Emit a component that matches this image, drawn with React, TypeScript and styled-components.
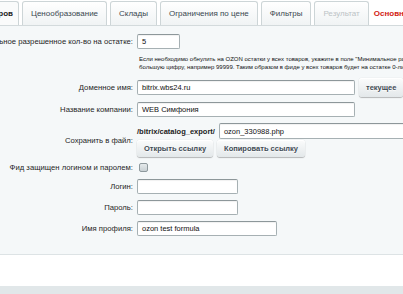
import React from "react";
import styled, { createGlobalStyle, css } from "styled-components";

const Global = createGlobalStyle`
  html, body { margin: 0; padding: 0; background: #ffffff; overflow: hidden; }
  body { font-family: "Liberation Sans", Arial, sans-serif; }
  #root { width: 403px; height: 294px; overflow: hidden; }
`;

const Page = styled.div`
  width: 403px;
  height: 294px;
  overflow: hidden;
  display: flex;
  flex-direction: column;
  background: #ffffff;
`;

const TabBar = styled.div`
  display: flex;
  align-items: flex-end;
  gap: 3px;
  height: 25px;
  flex: none;
  border-bottom: 1px solid #d3dadc;
  white-space: nowrap;
`;

const Tab = styled.div<{ $variant?: "active" | "disabled" | "error" | "normal" }>`
  flex: none;
  height: 24px;
  box-sizing: border-box;
  padding: 0 8px;
  display: flex;
  align-items: center;
  font-size: 8px;
  color: #3a4750;
  border: 1px solid #cdd5d7;
  border-bottom: none;
  border-radius: 3px 3px 0 0;
  background: linear-gradient(#ffffff, #f0f3f4);
  ${(p) =>
    p.$variant === "active" &&
    css`
      width: 100px;
      margin-left: -81px;
      justify-content: flex-end;
      padding-right: 5px;
      font-weight: bold;
      color: #222;
      background: #fafbfb;
    `}
  ${(p) =>
    p.$variant === "disabled" &&
    css`
      color: #bcc3c6;
    `}
  ${(p) =>
    p.$variant === "error" &&
    css`
      color: #d21a12;
      font-weight: bold;
      border-color: transparent;
      background: transparent;
      padding-left: 1px;
    `}
`;

const Panel = styled.div`
  flex: none;
  background: #f5f8f9;
  border-bottom: 1px solid #dde3e5;
  padding: 8px 0 0 0;
  display: flex;
  flex-direction: column;
  height: 229px;
  box-sizing: border-box;
`;

const Row = styled.div<{ $gap?: number }>`
  display: flex;
  align-items: center;
  gap: 4px;
  margin-top: ${(p) => p.$gap ?? 0}px;
  white-space: nowrap;
`;

const Label = styled.div`
  flex: none;
  width: 133px;
  text-align: right;
  font-size: 7.7px;
  color: #262626;
  display: flex;
  justify-content: flex-end;
`;

const Field = styled.div`
  display: flex;
  flex-direction: column;
  gap: 1px;
`;

const Line = styled.div`
  display: flex;
  align-items: center;
  gap: 4px;
`;

const Input = styled.div<{ $w: number; $h?: number }>`
  flex: none;
  width: ${(p) => p.$w}px;
  height: ${(p) => p.$h ?? 15}px;
  box-sizing: border-box;
  border: 1px solid #a6b0b3;
  border-top-color: #8d979a;
  border-radius: 2px;
  background: #ffffff;
  box-shadow: inset 0 1px 1px rgba(0, 0, 0, 0.06);
  font-size: 7.5px;
  color: #111;
  padding-left: 4px;
  display: flex;
  align-items: center;
  overflow: hidden;
`;

const Button = styled.div<{ $h?: number }>`
  flex: none;
  height: ${(p) => p.$h ?? 17}px;
  box-sizing: border-box;
  padding: 0 7px;
  display: flex;
  align-items: center;
  font-size: 7.5px;
  font-weight: bold;
  color: #3f4b54;
  border-radius: 3px;
  background: linear-gradient(#fbfcfc, #e3e8ea);
  box-shadow: 0 0 1px rgba(0, 0, 0, 0.2), 0 1px 1px rgba(0, 0, 0, 0.25),
    inset 0 1px #fff;
  text-shadow: 0 1px rgba(255, 255, 255, 0.7);
`;

const Note = styled.div`
  margin: 6px 0 0 139px;
  font-size: 6px;
  line-height: 8px;
  color: #111;
  white-space: nowrap;
`;

const Path = styled.span`
  font-size: 7.5px;
  font-weight: bold;
  color: #222;
`;

const Check = styled.div`
  width: 9px;
  height: 9px;
  margin-left: 2px;
  box-sizing: border-box;
  border: 1px solid #8e999d;
  border-radius: 2px;
  background: linear-gradient(#e4e9eb, #c9d1d4);
`;

const WhiteGap = styled.div`
  flex: none;
  height: 31px;
  background: #ffffff;
`;

const Footer = styled.div`
  flex: 1;
  background: #e1e7e9;
`;

export default function App() {
  return (
    <>
      <Global />
      <Page>
        <TabBar>
          <Tab $variant="active">Настройки товаров</Tab>
          <Tab>Ценообразование</Tab>
          <Tab>Склады</Tab>
          <Tab>Ограничения по цене</Tab>
          <Tab>Фильтры</Tab>
          <Tab $variant="disabled">Результат</Tab>
          <Tab $variant="error">Основные настройки</Tab>
        </TabBar>
        <Panel>
          <Row>
            <Label>Минимальное разрешенное кол-во на остатке:</Label>
            <Input $w={43}>5</Input>
          </Row>
          <Note>
            Если необходимо обнулить на OZON остатки у всех товаров, укажите в поле "Минимальное разрешенное кол-во"
            <br />
            большую цифру, например 99999. Таким образом в фиде у всех товаров будет на остатке 0-ли
          </Note>
          <Row $gap={7}>
            <Label>Доменное имя:</Label>
            <Line>
              <Input $w={218}>bitrix.wbs24.ru</Input>
              <Button $h={19}>текущее</Button>
            </Line>
          </Row>
          <Row $gap={5}>
            <Label>Название компании:</Label>
            <Input $w={218}>WEB Симфония</Input>
          </Row>
          <Row $gap={6}>
            <Label>Сохранить в файл:</Label>
            <Field>
              <Line>
                <Path>/bitrix/catalog_export/</Path>
                <Input $w={250} $h={16}>ozon_330988.php</Input>
              </Line>
              <Line>
                <Button>Открыть ссылку</Button>
                <Button>Копировать ссылку</Button>
              </Line>
            </Field>
          </Row>
          <Row $gap={6}>
            <Label>Фид защищен логином и паролем:</Label>
            <Check />
          </Row>
          <Row $gap={7}>
            <Label>Логин:</Label>
            <Input $w={101}></Input>
          </Row>
          <Row $gap={6}>
            <Label>Пароль:</Label>
            <Input $w={101}></Input>
          </Row>
          <Row $gap={6}>
            <Label>Имя профиля:</Label>
            <Input $w={140}>ozon test formula</Input>
          </Row>
        </Panel>
        <WhiteGap />
        <Footer />
      </Page>
    </>
  );
}
